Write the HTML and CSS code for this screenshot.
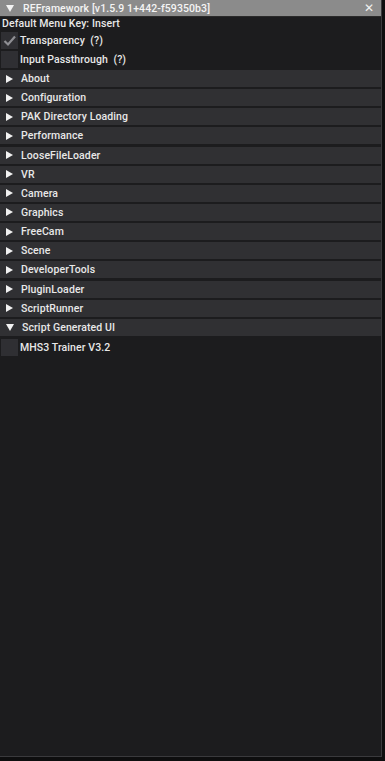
FILE: index.html
```html
<!DOCTYPE html>
<html>
<head>
<meta charset="utf-8">
<link rel="stylesheet" href="styles.css">
</head>
<body>
<div class="window">
  <div class="titlebar">
    <span class="tri down"></span>
    <span class="title">REFramework [v1.5.9 1+442-f59350b3]</span>
    <span class="close">✕</span>
  </div>
  <div class="content">
    <div class="line">Default Menu Key: Insert</div>
    <div class="check-row">
      <span class="box"><svg width="17" height="17" viewBox="0 0 17 17"><path d="M3.5 9 L7 12.5 L14 4.5" fill="none" stroke="#8e8e93" stroke-width="2.2"/></svg></span>
      <span class="label">Transparency&nbsp;&nbsp;(?)</span>
    </div>
    <div class="check-row">
      <span class="box"></span>
      <span class="label">Input Passthrough&nbsp;&nbsp;(?)</span>
    </div>
    <div class="headers">
      <div class="header"><span class="tri right"></span>About</div>
      <div class="header"><span class="tri right"></span>Configuration</div>
      <div class="header"><span class="tri right"></span>PAK Directory Loading</div>
      <div class="header"><span class="tri right"></span>Performance</div>
      <div class="header"><span class="tri right"></span>LooseFileLoader</div>
      <div class="header"><span class="tri right"></span>VR</div>
      <div class="header"><span class="tri right"></span>Camera</div>
      <div class="header"><span class="tri right"></span>Graphics</div>
      <div class="header"><span class="tri right"></span>FreeCam</div>
      <div class="header"><span class="tri right"></span>Scene</div>
      <div class="header"><span class="tri right"></span>DeveloperTools</div>
      <div class="header"><span class="tri right"></span>PluginLoader</div>
      <div class="header"><span class="tri right"></span>ScriptRunner</div>
      <div class="header"><span class="tri down"></span>Script Generated UI</div>
    </div>
    <div class="check-row trainer">
      <span class="box"></span>
      <span class="label">MHS3 Trainer V3.2</span>
    </div>
  </div>
</div>
</body>
</html>
```
FILE: styles.css
```css
html, body {
  margin: 0;
  padding: 0;
  background: #0e0e0f;
}
body {
  width: 385px;
  height: 761px;
  font-family: Roboto, "Liberation Sans", sans-serif;
  font-size: 10.5px;
  font-weight: 500;
  color: #e8e8e8;
  letter-spacing: 0.1px;
}
.window {
  width: 381px;
  height: 756px;
  background: #1c1c1e;
  border-right: 1px solid #3a3a3d;
  border-bottom: 1px solid #3a3a3d;
  box-sizing: content-box;
  display: flex;
  flex-direction: column;
}
.titlebar {
  height: 16px;
  background: #8b8b8b;
  display: flex;
  align-items: center;
  color: #f4f4f4;
  border-bottom: 1px solid #2a2a2a;
}
.titlebar .tri {
  margin-left: 6px;
  margin-right: 9px;
}
.title {
  flex: 1;
  white-space: nowrap;
}
.close {
  font-size: 12px;
  color: #f0f0f0;
  margin-right: 7px;
}
.tri {
  display: inline-block;
  width: 0;
  height: 0;
}
.tri.down {
  border-left: 4px solid transparent;
  border-right: 4px solid transparent;
  border-top: 7px solid #f2f2f2;
}
.tri.right {
  border-top: 4px solid transparent;
  border-bottom: 4px solid transparent;
  border-left: 7px solid #f2f2f2;
}
.content {
  padding-left: 1px;
  display: flex;
  flex-direction: column;
}
.line {
  height: 13px;
  line-height: 13px;
  padding-left: 1px;
}
.check-row {
  height: 17px;
  display: flex;
  align-items: center;
  gap: 2px;
  margin-top: 2px;
}
.check-row.trainer {
  margin-top: 3px;
}
.box {
  width: 17px;
  height: 17px;
  background: #2f2f33;
  display: inline-block;
}
.box svg {
  display: block;
}
.label {
  white-space: nowrap;
}
.headers {
  display: flex;
  flex-direction: column;
  gap: 2.15px;
  margin-top: 2px;
  margin-left: -1px;
}
.header {
  height: 17px;
  background: #303033;
  display: flex;
  align-items: center;
  padding-left: 6px;
  width: 375px;
}
.header .tri {
  margin-right: 8px;
}
```
